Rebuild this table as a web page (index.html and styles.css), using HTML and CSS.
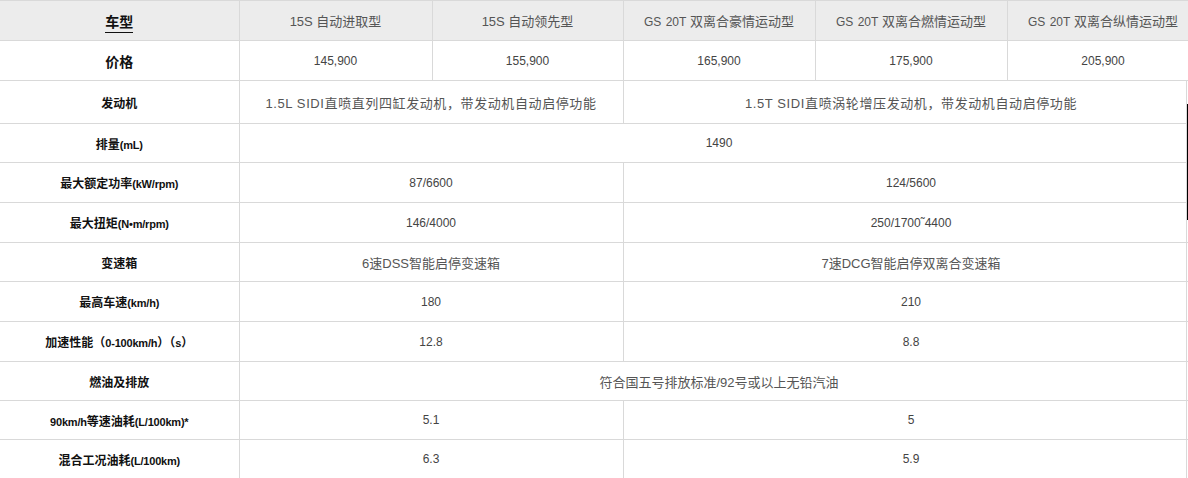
FILE: index.html
```html
<!DOCTYPE html>
<html lang="zh-CN">
<head>
<meta charset="utf-8">
<title>参数配置</title>
<link rel="stylesheet" href="styles.css">
</head>
<body>
<table class="spec">
  <colgroup>
    <col class="c1"><col class="c2"><col class="c3"><col class="c4"><col class="c5"><col class="c6">
  </colgroup>
  <thead>
    <tr class="head">
      <th class="label big"><span class="ul">车型</span></th>
      <th>15S 自动进取型</th>
      <th>15S 自动领先型</th>
      <th class="gs"><span class="lat">GS 20T</span> 双离合豪情运动型</th>
      <th class="gs"><span class="lat">GS 20T</span> 双离合燃情运动型</th>
      <th class="gs"><span class="lat">GS 20T</span> 双离合纵情运动型</th>
    </tr>
  </thead>
  <tbody>
    <tr class="r40">
      <td class="label big">价格</td>
      <td class="num">145,900</td><td class="num">155,900</td><td class="num">165,900</td><td class="num">175,900</td><td class="num">205,900</td>
    </tr>
    <tr class="r43">
      <td class="label">发动机</td>
      <td colspan="2" class="txt">1.5L SIDI直喷直列四缸发动机，带发动机自动启停功能</td>
      <td colspan="3" class="txt">1.5T SIDI直喷涡轮增压发动机，带发动机自动启停功能</td>
    </tr>
    <tr class="r39">
      <td class="label">排量<span class="unit">(mL)</span></td>
      <td colspan="5" class="num">1490</td>
    </tr>
    <tr class="r40">
      <td class="label">最大额定功率<span class="unit">(kW/rpm)</span></td>
      <td colspan="2" class="num">87/6600</td>
      <td colspan="3" class="num">124/5600</td>
    </tr>
    <tr class="r40">
      <td class="label">最大扭矩<span class="unit">(N•m/rpm)</span></td>
      <td colspan="2" class="num">146/4000</td>
      <td colspan="3" class="num">250/1700˜4400</td>
    </tr>
    <tr class="r39">
      <td class="label">变速箱</td>
      <td colspan="2" class="txt">6速DSS智能启停变速箱</td>
      <td colspan="3" class="txt">7速DCG智能启停双离合变速箱</td>
    </tr>
    <tr class="r40">
      <td class="label">最高车速<span class="unit">(km/h)</span></td>
      <td colspan="2" class="num">180</td>
      <td colspan="3" class="num">210</td>
    </tr>
    <tr class="r40">
      <td class="label">加速性能（<span class="unit">0-100km/h</span>）（<span class="unit">s</span>）</td>
      <td colspan="2" class="num">12.8</td>
      <td colspan="3" class="num">8.8</td>
    </tr>
    <tr class="r39">
      <td class="label">燃油及排放</td>
      <td colspan="5" class="txt">符合国五号排放标准/92号或以上无铅汽油</td>
    </tr>
    <tr class="r39">
      <td class="label"><span class="unit">90km/h</span>等速油耗<span class="unit">(L/100km)*</span></td>
      <td colspan="2" class="num">5.1</td>
      <td colspan="3" class="num">5</td>
    </tr>
    <tr class="r39">
      <td class="label">混合工况油耗<span class="unit">(L/100km)</span></td>
      <td colspan="2" class="num">6.3</td>
      <td colspan="3" class="num">5.9</td>
    </tr>
  </tbody>
</table>
<div class="scroll-track"></div>
<div class="scroll-thumb"></div>
</body>
</html>
```
FILE: styles.css
```css
html, body {
  margin: 0;
  padding: 0;
  background: #fff;
}
body {
  font-family: "Liberation Sans", "Noto Sans CJK SC", sans-serif;
  color: #555;
  position: relative;
  width: 1188px;
  height: 478px;
  overflow: hidden;
}
.spec {
  border-collapse: collapse;
  table-layout: fixed;
  width: 1199px;
}
.c1 { width: 239px; }
.c2 { width: 193px; }
.c3 { width: 191px; }
.c4 { width: 192px; }
.c5 { width: 192px; }
.c6 { width: 192px; }

.spec th, .spec td {
  border: 1px solid #d9d9d9;
  padding: 0;
  text-align: center;
  vertical-align: middle;
}
.spec tr > :first-child {
  border-left: none;
}
.head th {
  background: #ececec;
  height: 39px;
  font-weight: normal;
  font-size: 13px;
  color: #555;
}
.head th.gs .lat {
  font-size: 12px;
  word-spacing: 1px;
}
.r40 td { height: 39px; }
.r39 td { height: 38px; }
.r43 td { height: 42px; }

.label {
  font-family: "Noto Sans CJK SC", "Liberation Sans", sans-serif;
  font-weight: bold;
  font-size: 12px;
  color: #111;
}
.label .unit {
  font-family: "Liberation Sans", sans-serif;
  font-size: 11px;
  letter-spacing: -0.2px;
}
.label.big {
  font-size: 14px;
}
.head th.label {
  font-weight: bold;
  color: #111;
  letter-spacing: 0;
}
.ul {
  border-bottom: 1.5px solid #111;
  padding-bottom: 1px;
}
.num {
  font-size: 12px;
  color: #444;
}
.txt {
  font-size: 13px;
  color: #555;
}
.r43 .txt {
  letter-spacing: 0.6px;
}
.scroll-track {
  position: absolute;
  left: 1186px;
  top: 80px;
  width: 1px;
  height: 398px;
  background: #d9d9d9;
}
.scroll-thumb {
  position: absolute;
  left: 1187px;
  top: 104px;
  width: 1px;
  height: 116px;
  background: #000;
}
```
